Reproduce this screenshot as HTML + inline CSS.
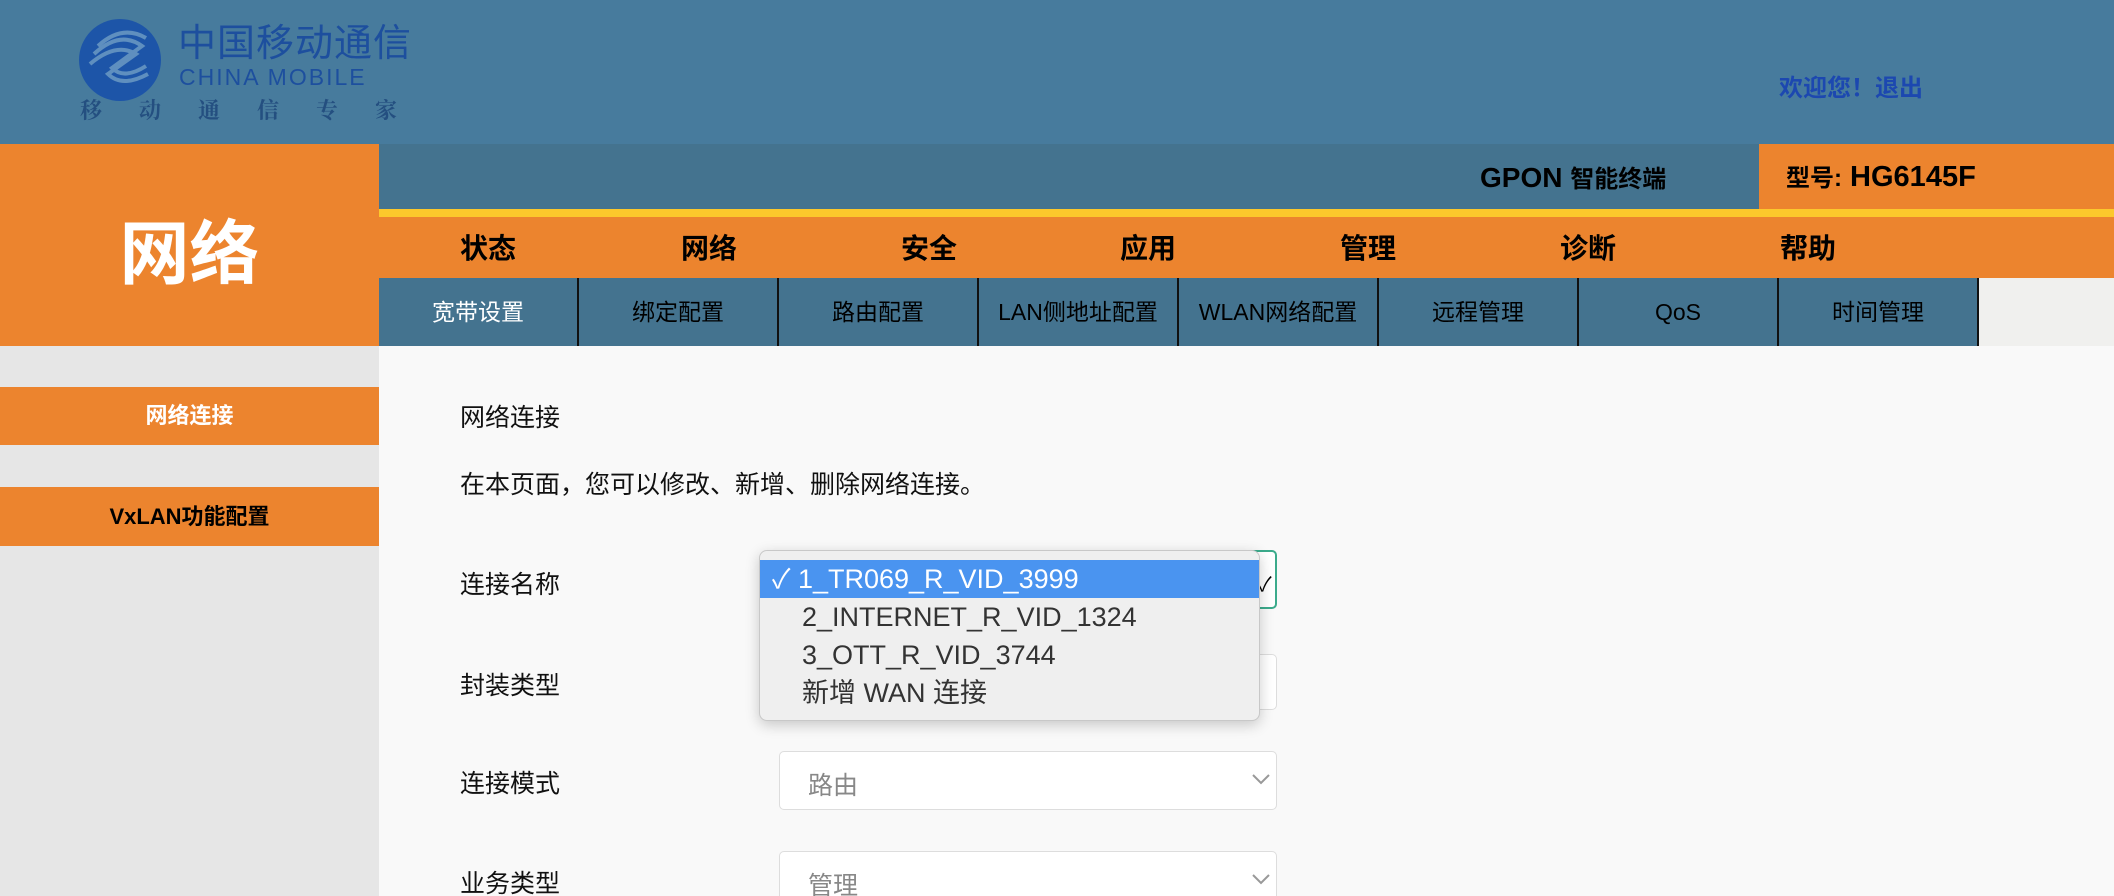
<!DOCTYPE html>
<html><head><meta charset="utf-8"><style>
*{margin:0;padding:0;box-sizing:border-box}
html,body{width:2114px;height:896px;overflow:hidden}
body{background:#f9f9f9;font-family:"Liberation Sans","Noto Sans CJK SC",sans-serif;position:relative}
.a{position:absolute}
.hdr{left:0;top:0;width:2114px;height:144px;background:#477b9d}
.nav div,.sub div{position:absolute;text-align:center}
</style></head><body>
<div class="a hdr"></div>
<svg class="a" style="left:76px;top:16px" width="90" height="90" viewBox="0 0 90 90">
<circle cx="44" cy="44" r="41" fill="#1d55a8"/>
<g fill="none" stroke="#5f8fbf" stroke-width="4">
<path d="M18 38 Q44 14 66 30 L36 52 Q48 64 70 50"/>
<path d="M14 48 Q40 26 60 38 L32 58 Q46 72 72 58"/>
<path d="M22 30 Q46 8 70 22"/>
</g></svg>
<div class="a" style="left:178px;top:12px;font-size:38px;color:#1d4f9e;letter-spacing:1px">中国移动通信</div>
<div class="a" style="left:179px;top:64px;font-size:23px;color:#1d4f9e;letter-spacing:2px">CHINA MOBILE</div>
<div class="a" style="left:80px;top:94px;font-size:22px;color:#244f80;font-weight:bold;letter-spacing:37px;font-family:'Noto Serif CJK SC',serif">移动通信专家</div>
<div class="a" style="left:1779px;top:68px;font-size:24px;color:#1c48b0;font-weight:bold">欢迎您！退出</div>

<div class="a" style="left:0;top:144px;width:379px;height:202px;background:#ec842e"></div>
<div class="a" style="left:0;top:198px;width:379px;text-align:center;color:#fff;font-size:70px;font-weight:bold">网络</div>
<div class="a" style="left:379px;top:144px;width:1735px;height:65px;background:#44738f"></div>
<div class="a" style="left:1480px;top:159px;font-size:28px;font-weight:bold;color:#000">GPON <span style="font-size:24px">智能终端</span></div>
<div class="a" style="left:1759px;top:144px;width:355px;height:65px;background:#ec842e"></div>
<div class="a" style="left:1786px;top:158px;font-size:29px;font-weight:bold;color:#000"><span style="font-size:24px">型号:</span> HG6145F</div>
<div class="a" style="left:379px;top:209px;width:1735px;height:8px;background:#fcc82c"></div>
<div class="a nav" style="left:379px;top:217px;width:1735px;height:61px;background:#ec842e;font-size:28px;font-weight:bold;color:#000">
<div style="left:59px;width:100px;top:10px">状态</div>
<div style="left:280px;width:100px;top:10px">网络</div>
<div style="left:500px;width:100px;top:10px">安全</div>
<div style="left:719px;width:100px;top:10px">应用</div>
<div style="left:939px;width:100px;top:10px">管理</div>
<div style="left:1159px;width:100px;top:10px">诊断</div>
<div style="left:1379px;width:100px;top:10px">帮助</div>
</div>
<div class="a sub" style="left:379px;top:278px;width:1735px;height:68px;background:#f0f0ee;font-size:23px">
<div style="left:0;width:200px;height:68px;background:#44738f;color:#fff;line-height:68px;border-right:2px solid #111">宽带设置</div>
<div style="left:200px;width:200px;height:68px;background:#44738f;color:#000;line-height:68px;border-right:2px solid #111">绑定配置</div>
<div style="left:400px;width:200px;height:68px;background:#44738f;color:#000;line-height:68px;border-right:2px solid #111">路由配置</div>
<div style="left:600px;width:200px;height:68px;background:#44738f;color:#000;line-height:68px;border-right:2px solid #111;white-space:nowrap">LAN侧地址配置</div>
<div style="left:800px;width:200px;height:68px;background:#44738f;color:#000;line-height:68px;border-right:2px solid #111;white-space:nowrap">WLAN网络配置</div>
<div style="left:1000px;width:200px;height:68px;background:#44738f;color:#000;line-height:68px;border-right:2px solid #111">远程管理</div>
<div style="left:1200px;width:200px;height:68px;background:#44738f;color:#000;line-height:68px;border-right:2px solid #111">QoS</div>
<div style="left:1400px;width:200px;height:68px;background:#44738f;color:#000;line-height:68px;border-right:2px solid #111">时间管理</div>
</div>

<div class="a" style="left:0;top:346px;width:379px;height:550px;background:#e6e6e6"></div>
<div class="a" style="left:0;top:387px;width:379px;height:58px;background:#ec842e;color:#fff;font-size:22px;font-weight:bold;text-align:center;line-height:58px">网络连接</div>
<div class="a" style="left:0;top:487px;width:379px;height:59px;background:#ec842e;color:#000;font-size:22px;font-weight:bold;text-align:center;line-height:59px">VxLAN功能配置</div>

<div class="a" style="left:460px;top:398px;font-size:25px;color:#111">网络连接</div>
<div class="a" style="left:460px;top:465px;font-size:25px;color:#111">在本页面，您可以修改、新增、删除网络连接。</div>
<div class="a" style="left:460px;top:565px;font-size:25px;color:#111">连接名称</div>
<div class="a" style="left:460px;top:666px;font-size:25px;color:#111">封装类型</div>
<div class="a" style="left:460px;top:764px;font-size:25px;color:#111">连接模式</div>
<div class="a" style="left:460px;top:864px;font-size:25px;color:#111">业务类型</div>

<div class="a" style="left:779px;top:550px;width:498px;height:59px;border:2px solid #3cab8c;border-radius:5px;background:#fff"></div>
<div class="a" style="left:1258px;top:568px;font-size:20px">✓</div>
<div class="a" style="left:779px;top:654px;width:498px;height:56px;border:1px solid #ddd;border-radius:5px;background:#fff"></div>
<div class="a" style="left:779px;top:751px;width:498px;height:59px;border:1px solid #ddd;border-radius:5px;background:#fff"></div>
<div class="a" style="left:808px;top:766px;font-size:25px;color:#888">路由</div>
<svg class="a" style="left:1252px;top:773px" width="18" height="12"><path d="M1 2 L9 10 L17 2" fill="none" stroke="#999" stroke-width="2"/></svg>
<div class="a" style="left:779px;top:851px;width:498px;height:59px;border:1px solid #ddd;border-radius:5px;background:#fff"></div>
<div class="a" style="left:808px;top:866px;font-size:25px;color:#888">管理</div>
<svg class="a" style="left:1252px;top:873px" width="18" height="12"><path d="M1 2 L9 10 L17 2" fill="none" stroke="#999" stroke-width="2"/></svg>

<div class="a" style="left:759px;top:550px;width:501px;height:171px;background:#efefef;border:1px solid #c8c8c8;border-radius:8px;box-shadow:0 4px 14px rgba(0,0,0,.2);font-size:27px;color:#333">
<div style="position:absolute;left:0;top:9px;width:499px;height:38px;background:#4a94f0;color:#fff;line-height:38px;padding-left:12px">✓ 1_TR069_R_VID_3999</div>
<div style="position:absolute;left:42px;top:47px;line-height:38px">2_INTERNET_R_VID_1324</div>
<div style="position:absolute;left:42px;top:85px;line-height:38px">3_OTT_R_VID_3744</div>
<div style="position:absolute;left:42px;top:123px;line-height:38px">新增 WAN 连接</div>
</div>
</body></html>
